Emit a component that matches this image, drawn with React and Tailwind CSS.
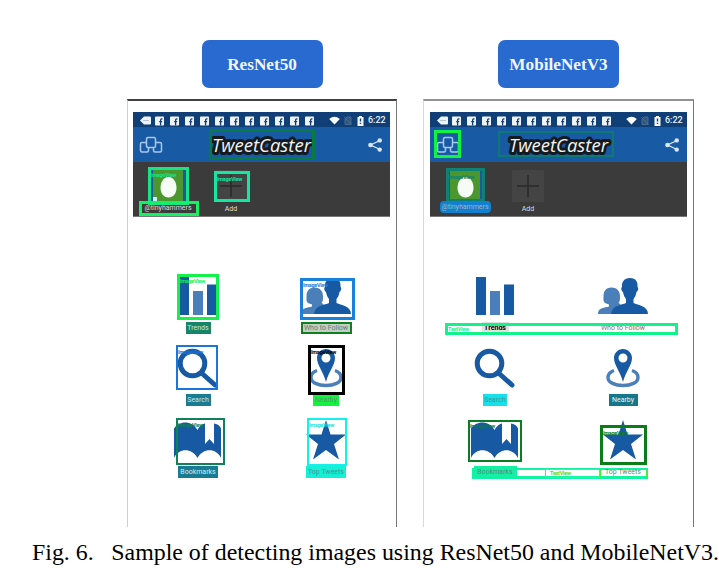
import React from "react";

const Bars = () => (
  <svg viewBox="0 0 52 40" className="h-10 w-[52px]">
    <path d="M7 1h10v38H7zM35 8.500h10V39H35z" fill="#175aa3" />
    <path d="M21 15h10v24H21z" fill="#4a7fba" />
  </svg>
);
const People = () => (
  <svg viewBox="0 0 52 40" className="h-10 w-[52px]">
    <path d="M14.500 11.500c-6 0-8 4-8 9 0 3-.5 5 1.500 6.500l4 1.500v2C8 32 1 31 1 38h20l6-8-4-1.500c0-1-1-1.500-1.500-1.500 1.500-1.500 1.500-4 1.500-6.500 0-5-2.500-9-8.500-9z" fill="#4a7fba" />
    <path d="M33 2c-6 0-8.500 4-8 9-1.500 1-.5 4 1 5 .5 3 1.500 5 3 7v4c-4 2-14 2-15 11h37c0-8-10-9-14.500-11v-4c1.500-2 2.500-4 3-7 1.500-1 2.500-4 1-5C41 6 39 2 33 2z" fill="#175aa3" />
  </svg>
);
const Search = () => (
  <svg viewBox="0 0 52 40" className="h-10 w-[52px]" fill="none" stroke="#175aa3">
    <circle cx="20.500" cy="15.500" r="12.300" strokeWidth="5" />
    <path d="M29.500 25L43 37" strokeWidth="5" strokeLinecap="round" />
  </svg>
);
const Pin = () => (
  <svg viewBox="0 0 52 40" className="h-10 w-[52px]">
    <path d="M17 22.500c-4.500 1.500-6 4-6 7 0 5 7 8 15 8s15-3 15-8c0-3-1.500-5.500-6-7" fill="none" stroke="#4a7fba" strokeWidth="3.400" />
    <path fillRule="evenodd" d="M26 1c-5 0-9 4-9 9 0 7 6 13 9 24 3-11 9-17 9-24 0-5-4-9-9-9zm0 4.500a4.500 4.500 0 110 9 4.500 4.500 0 010-9z" fill="#175aa3" />
  </svg>
);
const Book = () => (
  <svg viewBox="0 0 52 40" className="h-10 w-[52px]">
    <path d="M2 8.500C7 .5 20 0 25.500 10 27 7 30 4 33 3.500V24l4.500-5 4.500 5V3.500c3 .5 6 2 7 5V38C44 27.500 31 28 25.500 38 20 28 7 27.500 2 38z" fill="#175aa3" />
  </svg>
);
const Star = () => (
  <svg viewBox="0 0 52 40" className="h-10 w-[52px]">
    <path d="M26 0l4.500 14.500H46L34 24l5 15.500-13-9.500-13 9.500L18 24 6 14.500h15.500z" fill="#175aa3" />
  </svg>
);

const Facebook = () => (
  <svg viewBox="0 0 9 10" className="h-[10px] w-[9px]">
    <rect y=".5" width="9" height="9" rx=".8" fill="#eef4f8" />
    <path d="M7.500 2.900H6.700Q5.600 2.900 5.600 4v5.500M4.200 5.600h3" fill="none" stroke="#123f73" strokeWidth="1.300" />
  </svg>
);

const StatusBar = () => (
  <div className="flex h-[15px] shrink-0 items-center bg-[#103f77] pl-[7px] pr-[3px] pt-[2px] text-[#e9f0f6]">
    <svg viewBox="0 0 11 9" className="h-[9px] w-[11px]">
      <path d="M4 .5h6q1 0 1 1v6q0 1-1 1H4L0 4.500z" fill="#eef4f8" />
      <path d="M3.500 4.500h6" stroke="#7892ac" strokeDasharray="1 1" />
    </svg>
    <div className="ml-[4px] flex gap-[6px]">
      {Array.from({ length: 11 }, (_, i) => <Facebook key={i} />)}
    </div>
    <div className="ml-auto flex items-center">
      <svg viewBox="0 0 11 9" className="h-[9px] w-[11px]"><path d="M.2 3Q5.500-1.500 10.800 3L5.500 8.500z" fill="#fff" /></svg>
      <svg viewBox="0 0 8 9" className="ml-[4px] h-[9px] w-2"><path d="M1 3l2-2h4v7.500H1zM0 1l7.500 7.500" fill="#33567f" stroke="#507399" strokeWidth=".8" /></svg>
      <svg viewBox="0 0 7 10" className="ml-[5px] h-[10px] w-[7px]">
        <path d="M2 0h3v1h1.500v9H.5V1H2z" fill="#f3f7fa" />
        <path d="M3.500 2.500v3M3.500 6.700v1.200" stroke="#123f73" strokeWidth="1.400" />
      </svg>
      <span className="ml-[4px] w-[19px] whitespace-nowrap text-[9px] font-medium leading-none">6:22</span>
    </div>
  </div>
);

const Header = () => (
  <div className="flex h-[35px] shrink-0 items-center bg-[#185aa4] pl-[6px] pr-[8px]">
    <svg viewBox="0 0 24 18" className="mt-px h-[18px] w-6" fill="none" stroke="#a9c9ee" strokeWidth="1.500">
      <path d="M7.500 6.500H3q-1.500 0-1.500 1.500v6.500Q1.500 16 3 16h5q1.500 0 1.500-1.500V12M16.500 6.500H21q1.500 0 1.500 1.500v6.500q0 1.500-1.500 1.500h-5q-1.500 0-1.500-1.500V12" />
      <rect x="7.500" y="1.500" width="9" height="10" rx="1.500" />
    </svg>
    <svg viewBox="0 0 112 30" className="ml-[44px] h-[30px] w-[112px]">
      <text
        x="5" y="21.500" textLength="99" lengthAdjust="spacingAndGlyphs"
        className="fill-[#f4f4f4] stroke-[#131a20] stroke-[6px] font-['Open_Sans'] text-[19px] font-medium italic [paint-order:stroke] [stroke-linejoin:round]"
      >
        TweetCaster
      </text>
    </svg>
    <svg viewBox="0 0 14 14" className="ml-auto h-[14px] w-[14px]" fill="#d8e8f8">
      <path d="M12 2.500L2.500 7l9.500 4.500" fill="none" stroke="#d8e8f8" strokeWidth="1.300" />
      <circle cx="2.500" cy="7" r="2.300" /><circle cx="11.700" cy="2.400" r="2.200" /><circle cx="11.700" cy="11.600" r="2.200" />
    </svg>
  </div>
);

const Accounts = ({ name }) => (
  <div className="flex h-[55px] shrink-0 border-b border-[#777] bg-[#3b3b3b] pt-[8px] text-[7px] leading-none text-[#ddd]">
    <div className="flex w-[70px] flex-col items-center">
      <div className="flex h-[32px] w-[36px] shrink-0 justify-center bg-[#1d589c]">
        <div className="flex h-full w-[30px] items-center justify-center bg-[#4c962f]">
          <svg viewBox="0 0 17 22" className="mt-px h-[22px] w-[17px]"><path d="M8.500 1C14 1 16.500 7 16.500 12S13.500 21.500 8.500 21.500.5 17 .5 12 3 1 8.500 1z" fill="#f7fbf5" /></svg>
        </div>
      </div>
      <span className={`flex shrink-0 items-center justify-center ${name}`}>@tinyhammers</span>
    </div>
    <div className="flex w-[56px] flex-col items-center">
      <svg viewBox="0 0 32 32" className="h-8 w-8 shrink-0"><path d="M0 0h32v32H0z" fill="#444" /><path d="M16 5v22M5 16h22" stroke="#292929" strokeWidth="1.500" /></svg>
      <span className="mt-[4px]">Add</span>
    </div>
  </div>
);

const items = [
  [Bars, "Trends"], [People, "Who to Follow"], [Search, "Search"],
  [Pin, "Nearby"], [Book, "Bookmarks"], [Star, "Top Tweets"],
];

const Phone = ({ frame, name, labels, children }) => (
  <div className="relative h-[428px]">
    <div className={`flex h-full flex-col ${frame}`}>
      <StatusBar />
      <Header />
      <Accounts name={name} />
      <div className="ml-px mt-[59px] grid grid-cols-[128px_128px] auto-rows-[72px]">
        {items.map(([Icon, label], i) => (
          <div key={label} className="flex flex-col items-center">
            <Icon />
            <div className={`mt-[6px] flex h-3 shrink-0 items-center justify-center whitespace-nowrap text-[7px] leading-none ${labels[i]}`}>{label}</div>
          </div>
        ))}
      </div>
    </div>
    {children}
  </div>
);

// Detection rectangle laid over the app screen, with an optional class tag.
const Box = ({ c, tag }) => (
  <div className={`absolute whitespace-nowrap text-[5.500px] font-bold leading-[7px] tracking-tighter ${c}`}>{tag}</div>
);

const Title = ({ children }) => (
  <div className="flex h-[48px] w-[121px] items-center justify-center rounded-[7px] bg-[#286ad0] pt-px font-['Liberation_Serif',serif] text-[17.200px] font-bold text-[#f0f6ff]">
    {children}
  </div>
);

export default function App() {
  return (
    <main className="h-[578px] w-[719px] overflow-hidden bg-white pt-[40px] font-[Roboto,sans-serif]">
      <div className="flex gap-[26px] pl-[127px]">
        <section className="flex w-[270px] flex-col gap-[11px]">
          <div className="flex justify-center"><Title>ResNet50</Title></div>
          <Phone
            frame="border-x border-t-2 border-l-[#cfcfcf] border-r-[#777] border-t-[#414141] pl-[5px] pr-[6px] pt-[11px]"
            name="mt-[3px]"
            labels={[
              "w-[25px] bg-[#178568] text-[#c9e8de]",
              "w-[51px] border-2 border-[#0d811b] bg-[#c3cec6] text-[#65806a]",
              "w-[25px] bg-[#1a7c92] text-[#c9e5eb]",
              "w-[26px] bg-[#12f23e] text-[#5b9868]",
              "w-[40px] bg-[#1a7c92] text-[#d6edf1]",
              "w-[40px] bg-[#14efd5] text-[#528f91]",
            ]}
          >
            <Box c="left-[82px] top-[30px] h-[31px] w-[106px] border-[3px] border-[#087a43]" />
            <Box c="left-[21px] top-[68px] h-[38px] w-[41px] border-[3px] border-[#16e486] pt-[2px] text-[#16e486]" tag="ImageView" />
            <Box c="left-[12px] top-[102px] h-[15px] w-[60px] border-[3px] border-[#12f263]" />
            <Box c="left-[26px] top-[98px] h-[4px] w-[4px] bg-[#d0eeff]" />
            <Box c="left-[87px] top-[72px] h-[31px] w-[36px] border-[3px] border-[#13e7a1] pt-[2px] text-[#13e7a1]" tag="ImageView" />
            <Box c="left-[50px] top-[175px] h-[46px] w-[42px] border-[3px] border-[#12f24a] pt-px text-[#12f24a]" tag="ImageView" />
            <Box c="left-[173px] top-[179px] h-[42px] w-[55px] border-[3px] border-[#1980dc] pt-px text-[#1980dc]" tag="ImageView" />
            <Box c="left-[49px] top-[246px] h-[45px] w-[42px] border-2 border-[#1b75dc] pt-[2px] text-[#1b75dc]" tag="ImageView" />
            <Box c="left-[181px] top-[246px] h-[50px] w-[37px] border-[3px] border-black pt-px text-black" tag="ImageView" />
            <Box c="left-[49px] top-[319px] h-[47px] w-[49px] border-2 border-[#118157] pt-[2px] text-[#118157]" tag="ImageView" />
            <Box c="left-[180px] top-[319px] h-[48px] w-[40px] border-2 border-[#13f0ed] pt-[2px] text-[#13e3e1]" tag="ImageView" />
          </Phone>
        </section>
        <section className="flex w-[271px] flex-col gap-[11px]">
          <div className="flex justify-center"><Title>MobileNetV3</Title></div>
          <Phone
            frame="border-x border-t-2 border-l-[#d8d8d8] border-r-[#777] border-t-[#929292] pl-[6px] pr-[6px] pt-[11px]"
            name="relative z-10 -mt-px h-[12px] w-[51px] rounded-sm bg-[#1180d0] text-[#9fb8bf]"
            labels={[
              "w-[27px] bg-[#e0e0e0] text-black font-bold",
              "text-[7.500px] text-[#777]",
              "w-[24px] bg-[#15e0ec] text-[#528b94]",
              "w-[29px] bg-[#17778a] text-[#e7f6f9]",
              "relative z-10 w-[43px] bg-[#13f0a3] text-[#578d78]",
              "relative z-10 w-[48px] pt-px text-[#5c8c66]",
            ]}
          >
            <Box c="left-[11px] top-[31px] h-[28px] w-[27px] border-[3px] border-[#10f342]" />
            <Box c="left-[75px] top-[32px] h-[26px] w-[116px] border-2 border-[#0e7a6f]" />
            <Box c="left-[23px] top-[69px] h-[34px] w-[39px] border-[3px] border-[#0d8174] pt-[3px] text-[#0d8174]" tag="ImageView" />
            <Box c="left-[22px] top-[224px] h-[12px] w-[233px] border-[3px] border-[#12f28b] text-[#12f28b]" tag="TextView" />
            <Box c="left-[45px] top-[321px] h-[42px] w-[54px] border-2 border-[#0d7a25] pt-px text-[#0d7a45]" tag="ImageView" />
            <Box c="left-[177px] top-[326px] h-[40px] w-[47px] border-[3px] border-[#0b7d18] pt-[2px] text-[#0b7d18]" tag="ImageView" />
            <Box c="left-[49px] top-[369px] h-[11px] w-[176px] border-2 border-b-[3px] border-[#12f2a0]" />
            <Box c="left-[122px] top-[370px] h-[9px] w-[55px] border border-[#63f51d] pl-1 text-[#63d51d]" tag="TextView" />
            <Box c="left-[177px] top-[370px] h-[9px] w-[47px] border border-[#3cf52d]" />
          </Phone>
        </section>
      </div>
      <p className="flex h-[50px] items-center whitespace-nowrap pl-[32px] pt-px font-['Liberation_Serif',serif] text-[23.900px] text-black">
        <span className="w-[80px]">Fig. 6.</span>
        <span>Sample of detecting images using ResNet50 and MobileNetV3.</span>
      </p>
    </main>
  );
}
